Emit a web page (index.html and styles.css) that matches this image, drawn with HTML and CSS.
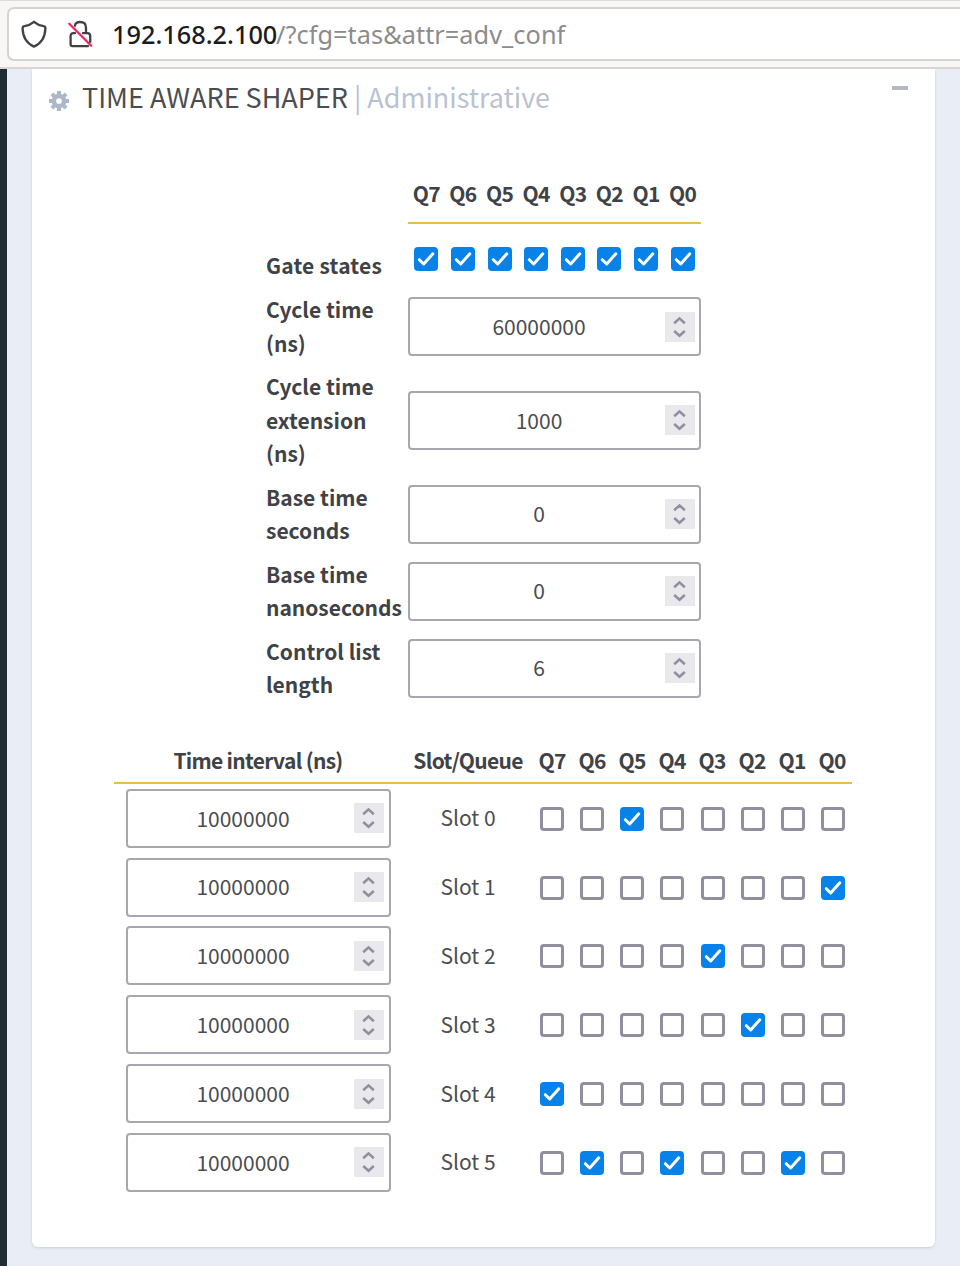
FILE: index.html
```
<!DOCTYPE html>
<html lang="en">
<head>
<meta charset="utf-8">
<title>Time Aware Shaper</title>
<link rel="stylesheet" href="styles.css">
</head>
<body>
<svg class="defs" aria-hidden="true">
  <symbol id="arrows" viewBox="0 0 30 30"><path d="M9.2 11.2 L14.5 6.4 L19.8 11.2 M9.2 19 L14.5 23.8 L19.8 19"/></symbol>
  <symbol id="tick" viewBox="0 0 24 24"><path d="M5.3 12.7 L9.7 17 L18.8 6.8"/></symbol>
</svg>
<header class="toolbar">
  <div class="urlbar">
    <svg class="shield" viewBox="0 0 28 30"><path d="M14 2.8 C10.8 5.5 7.5 6.6 4.4 7.2 C3.2 7.4 2.6 8 2.6 9.2 C2.8 17.5 5.5 23.8 14 27.6 C22.5 23.8 25.2 17.5 25.4 9.2 C25.4 8 24.8 7.4 23.6 7.2 C20.5 6.6 17.2 5.5 14 2.8 Z"/></svg>
    <svg class="lock" viewBox="0 0 26 28"><path d="M7 5.8 C7 3.5 9 2 12 2 C15.7 2 18 4.2 18 7.5 V13 M15 13.2 H19.5 C21.2 13.2 22.2 14.2 22.2 16 V22 M20 26.2 H4.5 C3.3 26.2 2.6 25.5 2.6 24.3 V16 C2.6 14.2 3.5 13.2 5.2 13.2 H7"/><path class="slash" d="M1.3 3.8 L23.2 25.8"/></svg>
    <div class="url"><span class="host">192.168.2.100</span><span class="query">/?cfg=tas&amp;attr=adv_conf</span></div>
  </div>
</header>
<div class="page">
  <main class="card">
    <div class="title">
      <svg class="gear" viewBox="0 0 20 20"><g class="teeth"><path d="M10 0V20M0 10H20M2.9 2.9L17.1 17.1M17.1 2.9L2.9 17.1"/></g><circle cx="10" cy="10" r="5.1"/></svg>
      <h1>TIME AWARE SHAPER <small>| Administrative</small></h1>
      <span class="collapse"></span>
    </div>
    <section class="settings">
      <div class="queues"><b>Q7</b><b>Q6</b><b>Q5</b><b>Q4</b><b>Q3</b><b>Q2</b><b>Q1</b><b>Q0</b></div>
      <div class="row gates"><label>Gate states</label><div class="checks" data-on="01234567"></div></div>
      <div class="row"><label>Cycle time<br>(ns)</label><div class="number"><span>60000000</span><svg><use href="#arrows"/></svg></div></div>
      <div class="row"><label>Cycle time<br>extension<br>(ns)</label><div class="number"><span>1000</span><svg><use href="#arrows"/></svg></div></div>
      <div class="row"><label>Base time<br>seconds</label><div class="number"><span>0</span><svg><use href="#arrows"/></svg></div></div>
      <div class="row"><label>Base time<br>nanoseconds</label><div class="number"><span>0</span><svg><use href="#arrows"/></svg></div></div>
      <div class="row"><label>Control list<br>length</label><div class="number"><span>6</span><svg><use href="#arrows"/></svg></div></div>
    </section>
    <section class="slots">
      <div class="head"><b class="interval">Time interval (ns)</b><b class="sq">Slot/Queue</b><b>Q7</b><b>Q6</b><b>Q5</b><b>Q4</b><b>Q3</b><b>Q2</b><b>Q1</b><b>Q0</b></div>
      <div class="slot"><div class="number"><span>10000000</span><svg><use href="#arrows"/></svg></div><span>Slot 0</span><div class="checks" data-on="5"></div></div>
      <div class="slot"><div class="number"><span>10000000</span><svg><use href="#arrows"/></svg></div><span>Slot 1</span><div class="checks" data-on="0"></div></div>
      <div class="slot"><div class="number"><span>10000000</span><svg><use href="#arrows"/></svg></div><span>Slot 2</span><div class="checks" data-on="3"></div></div>
      <div class="slot"><div class="number"><span>10000000</span><svg><use href="#arrows"/></svg></div><span>Slot 3</span><div class="checks" data-on="2"></div></div>
      <div class="slot"><div class="number"><span>10000000</span><svg><use href="#arrows"/></svg></div><span>Slot 4</span><div class="checks" data-on="7"></div></div>
      <div class="slot"><div class="number"><span>10000000</span><svg><use href="#arrows"/></svg></div><span>Slot 5</span><div class="checks" data-on="641"></div></div>
    </section>
  </main>
</div>
<script src="app.js"></script>
</body>
</html>
```

FILE: styles.css
```
* { box-sizing: border-box; }
body {
  margin: 0;
  height: 1266px;
  overflow: hidden;
  display: flex;
  flex-direction: column;
  background: #e9eef6;
  color: #4b4d50;
  font: 21px/33.5px "Noto Sans CJK SC", "Noto Sans", sans-serif;
}
.defs { display: none; }
.toolbar {
  flex: none;
  height: 69px;
  padding: 6px 0 0 7px;
  background: #f8f7f6;
  border-top: 1px solid #dedbd9;
  border-bottom: 2px solid #d9d5d3;
}
.urlbar {
  height: 54px;
  width: 970px;
  display: flex;
  align-items: center;
  background: #fff;
  border: 2px solid #d6d2cf;
  border-radius: 7px;
}
.shield, .lock { fill: none; stroke: #424246; stroke-width: 2.3; stroke-linecap: round; }
.shield { width: 28px; height: 30px; margin-left: 11px; }
.lock { width: 26px; height: 28px; margin-left: 20px; }
.lock .slash { stroke: #ee265e; }
.url {
  margin-left: 18px;
  padding-top: 1px;
  font-family: "Noto Sans", sans-serif;
  font-size: 25.3px;
  white-space: nowrap;
}
.host { display: inline-block; width: 164px; color: #1c1c20; font-weight: 500; }
.query { color: #8c8c8c; letter-spacing: 0.05px; }
.page {
  flex: 1;
  padding-left: 24px;
  border-left: 7px solid #202d33;
}
.card {
  width: 903px;
  height: 1178px;
  margin-left: 1px;
  background: #fff;
  border-radius: 0 0 6px 6px;
  box-shadow: 0 1px 3px #c9ced4;
}
.title {
  height: 98px;
  padding: 12px 27px 0 17px;
  display: flex;
  align-items: flex-start;
}
.gear { width: 20px; height: 20px; margin-top: 10px; fill: none; stroke: #acb7c7; stroke-width: 4.5; }
.gear .teeth { stroke-width: 4; stroke-dasharray: 4.2 11.6 4.2 0; }
h1 { margin: -2px 0 0 13px; font-size: 27px; line-height: 36px; font-weight: 400; white-space: nowrap; }
small { font-size: inherit; color: #b9c2d1; }
.collapse { width: 16px; height: 4px; margin: 5px 0 0 auto; background: #b2bac8; }
.settings { width: 435px; margin-left: 234px; }
.queues {
  margin-left: 142px;
  height: 57px;
  padding-top: 10px;
  display: grid;
  grid-template-columns: repeat(8, 1fr);
  text-align: center;
  border-bottom: 2px solid #edbd43;
}
b, label { color: #404246; font-weight: 700; white-space: nowrap; }
b { letter-spacing: -0.7px; }
.row { display: grid; grid-template-columns: 142px 293px; align-items: center; padding: 5px 0; }
.gates { height: 64px; padding: 0; align-items: start; }
.gates label { padding-top: 25px; letter-spacing: 0.2px; }
.gates .checks { padding-top: 23px; }
.number {
  height: 59px;
  display: flex;
  align-items: center;
  padding: 0 4px 0 3px;
  border: 2px solid #a7a7b0;
  border-radius: 4px;
}
.number span { flex: 1; text-align: center; }
.number svg { width: 30px; height: 30px; background: #e9e9ed; fill: none; stroke: #8f8f9d; stroke-width: 2.5; }
.checks { display: grid; grid-template-columns: repeat(8, 1fr); justify-items: center; }
.check { width: 24px; height: 24px; border: 3px solid #8f8f9d; border-radius: 4px; }
.on { border: 0; background: #0782e8; }
.check svg { display: block; width: 24px; height: 24px; fill: none; stroke: #fff; stroke-width: 3; stroke-linecap: round; stroke-linejoin: round; }
.slots { width: 738px; margin: 31px 0 0 82px; }
.head {
  height: 46px;
  padding-top: 6px;
  display: grid;
  grid-template-columns: 290px 128px repeat(8, 40px);
  text-align: center;
  border-bottom: 2px solid #edbd43;
}
.interval { padding-right: 2px; }
.slot {
  height: 68.8px;
  padding: 5.4px 0 0 12px;
  display: grid;
  grid-template-columns: 265px 154px 321px;
  align-items: start;
  text-align: center;
}
.slot > span { padding-top: 12.5px; }
.slot .number { padding: 0 5px 0 4px; }
.slot .checks { padding-top: 18px; margin: 0 13px 0 -13px; }
```

FILE: app.js
```
document.querySelectorAll(".checks").forEach(function (group) {
  for (let q = 7; q >= 0; q--) {
    const box = document.createElement("span");
    box.className = "check";
    if (group.dataset.on.includes(String(q))) {
      box.classList.add("on");
      box.innerHTML = '<svg><use href="#tick"/></svg>';
    }
    group.appendChild(box);
  }
});
```
